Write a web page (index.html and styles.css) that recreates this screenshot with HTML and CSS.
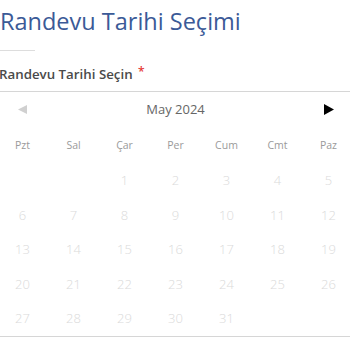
FILE: index.html
```html
<!DOCTYPE html>
<html lang="tr">
<head>
<meta charset="utf-8">
<link rel="stylesheet" href="styles.css">
</head>
<body>
<div class="page">
  <h1 class="title">Randevu Tarihi Seçimi</h1>
  <div class="title-rule"></div>
  <div class="field-label">Randevu Tarihi Seçin <span class="req">*</span></div>
  <div class="calendar">
    <div class="cal-head">
      <svg class="arrow prev" width="9" height="9" viewBox="0 0 9 9"><polygon points="9,0 9,9 0,4.5"/></svg>
      <span class="month">May 2024</span>
      <svg class="arrow next" width="10" height="11" viewBox="0 0 10 11"><polygon points="0,0 10,5.5 0,11"/></svg>
    </div>
    <div class="weekdays">
      <span>Pzt</span><span>Sal</span><span>Çar</span><span>Per</span><span>Cum</span><span>Cmt</span><span>Paz</span>
    </div>
    <div class="days">
      <span></span><span></span><span>1</span><span>2</span><span>3</span><span>4</span><span>5</span>
      <span>6</span><span>7</span><span>8</span><span>9</span><span>10</span><span>11</span><span>12</span>
      <span>13</span><span>14</span><span>15</span><span>16</span><span>17</span><span>18</span><span>19</span>
      <span>20</span><span>21</span><span>22</span><span>23</span><span>24</span><span>25</span><span>26</span>
      <span>27</span><span>28</span><span>29</span><span>30</span><span>31</span><span></span><span></span>
    </div>
  </div>
</div>
</body>
</html>
```
FILE: styles.css
```css
html, body {
  margin: 0;
  padding: 0;
  background: #ffffff;
  overflow: hidden;
}
body {
  font-family: "Open Sans", "Liberation Sans", sans-serif;
}
.page {
  width: 357px;
  margin-left: -3px;
}
.title {
  margin: 3px 0 0 0;
  padding-left: 3px;
  font-size: 23.5px;
  line-height: 36px;
  font-weight: 400;
  color: #3b5a97;
  white-space: nowrap;
}
.title-rule {
  margin-top: 11px;
  width: 38px;
  height: 1px;
  background: #dddddd;
}
.field-label {
  margin-top: 13px;
  padding-left: 2px;
  font-size: 13.3px;
  line-height: 20px;
  font-weight: 600;
  color: #4a4a4a;
  padding-bottom: 7px;
  border-bottom: 1px solid #d6d6d6;
  white-space: nowrap;
}
.req {
  position: relative;
  top: -3px;
  color: #e53935;
  font-size: 12px;
  line-height: 0;
  margin-left: 2px;
}
.calendar {
  border-bottom: 1px solid #d6d6d6;
}
.cal-head {
  height: 34px;
  display: flex;
  align-items: center;
  justify-content: space-between;
  padding: 0 20px 0 21px;
}
.arrow.prev { fill: #d0d0d0; }
.arrow.next { fill: #000000; }
.month {
  font-size: 13px;
  color: #666666;
}
.weekdays {
  display: grid;
  grid-template-columns: repeat(7, 51px);
  height: 37px;
  align-items: center;
  text-align: center;
  font-size: 10.5px;
  color: #9a9a9a;
}
.days {
  display: grid;
  grid-template-columns: repeat(7, 51px);
  grid-auto-rows: 34.5px;
  align-items: center;
  text-align: center;
  font-size: 13px;
  font-weight: 300;
  color: #dadada;
}
```
